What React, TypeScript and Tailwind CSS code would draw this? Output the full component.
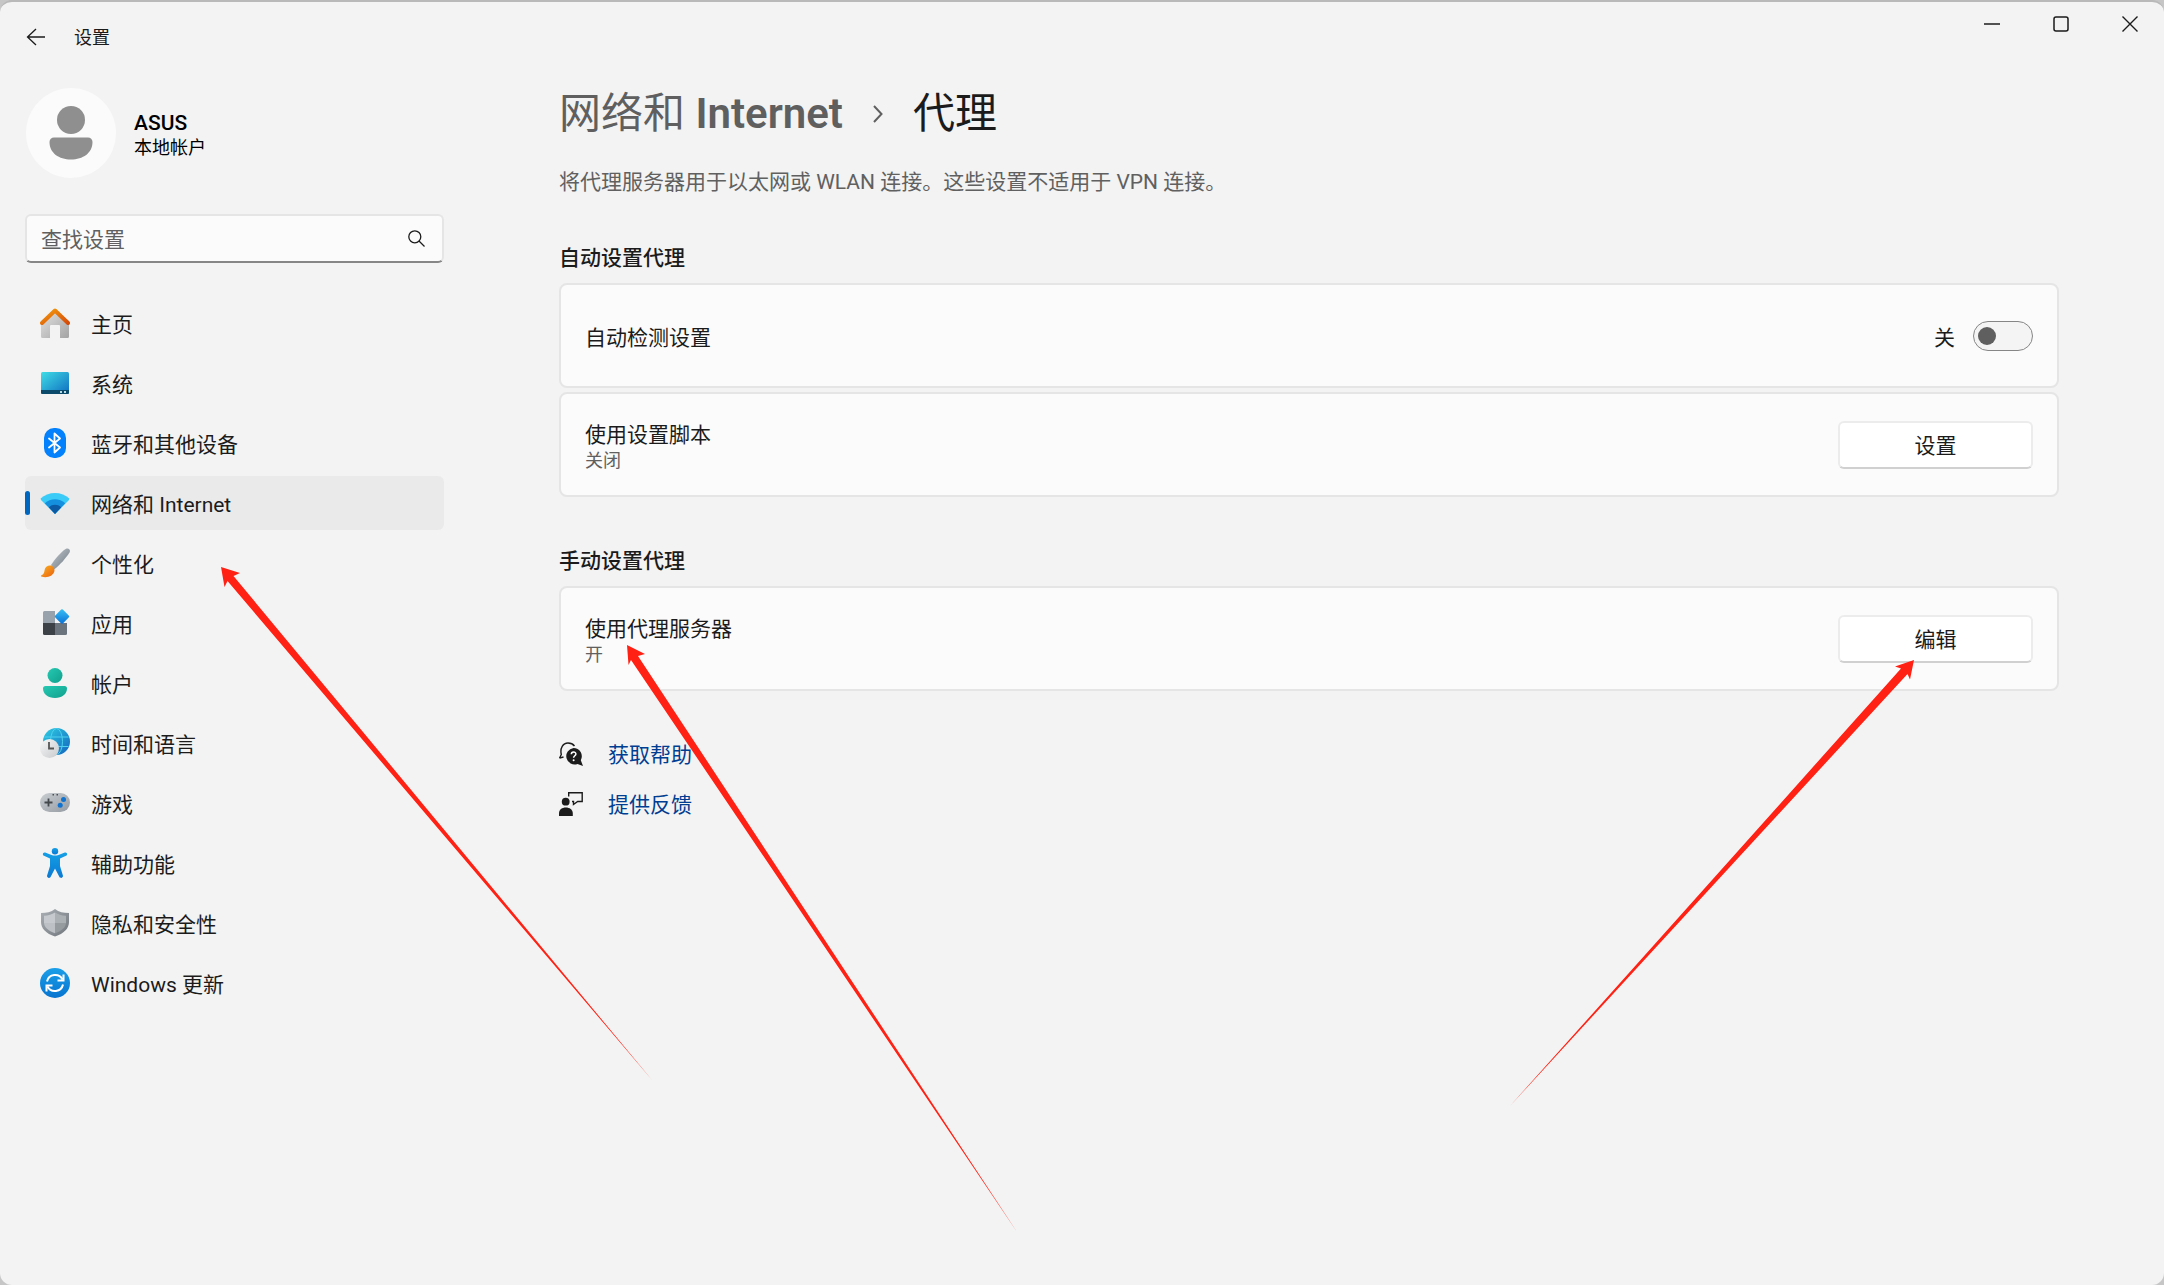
import { useState } from 'react';
import type { ReactNode } from 'react';

type NavItem = {
  label: string;
  icon: ReactNode;
};

const HomeIcon = () => (
  <svg viewBox="0 0 30 30" className="size-[30px]">
    <defs>
      <linearGradient id="homeWall" x1="0" y1="0" x2="1" y2="1">
        <stop offset="0" stopColor="#e4e4e4" />
        <stop offset="1" stopColor="#a3a3a3" />
      </linearGradient>
      <linearGradient id="homeRoof" x1="0" y1="0" x2="1" y2="1">
        <stop offset="0" stopColor="#f59a0c" />
        <stop offset="1" stopColor="#d64b08" />
      </linearGradient>
    </defs>
    <path d="M1 13 15 2l14 11v15.5a1.5 1.5 0 0 1-1.5 1.5H20V18a1 1 0 0 0-1-1h-8a1 1 0 0 0-1 1v12H2.500A1.500 1.500 0 0 1 1 28.500Z" fill="url(#homeWall)" />
    <path d="M2 15 15 2.500 28 15" fill="none" stroke="url(#homeRoof)" strokeWidth="4" strokeLinecap="round" strokeLinejoin="round" />
  </svg>
);

const SystemIcon = () => (
  <svg viewBox="0 0 30 30" className="size-[30px]">
    <defs>
      <linearGradient id="screen" x1="0" y1="0" x2="1" y2="1">
        <stop offset="0" stopColor="#3fdde6" />
        <stop offset="1" stopColor="#0f6dc0" />
      </linearGradient>
    </defs>
    <rect x="1" y="4" width="28" height="22" rx="1.500" fill="url(#screen)" />
    <path d="M1 22h28v2.500a1.500 1.500 0 0 1-1.500 1.500h-25A1.500 1.500 0 0 1 1 24.500Z" fill="#0b4a6b" />
    <path d="M20 23h2v2h-2zM24 23h2v2h-2z" fill="#b9dbe6" />
  </svg>
);

const BluetoothIcon = () => (
  <svg viewBox="0 0 30 30" className="size-[30px]">
    <rect x="4" y="0" width="22" height="30" rx="10" fill="#0380fb" />
    <path d="m9 10.500 11 9-5.500 5V5.500l5.500 5-11 9" fill="none" stroke="#fff" strokeWidth="1.800" strokeLinejoin="round" strokeLinecap="round" />
  </svg>
);

const NetworkIcon = () => (
  <svg viewBox="0 0 30 30" className="size-[30px]">
    <path d="M1 12 .6 10.600C8 3 22 3 29.400 10.600L29 12 15 26Z" fill="#3accf7" />
    <path d="M4.800 15.200C10.500 9.800 19.500 9.800 25.200 15.200L15 26Z" fill="#1490df" />
    <path d="M8.800 19.300C12.300 16 17.700 16 21.200 19.300L15 26Z" fill="#0c59a4" />
  </svg>
);

const BrushIcon = () => (
  <svg viewBox="0 0 30 30" className="size-[30px]">
    <defs>
      <linearGradient id="handle" x1="0" y1="0" x2="1" y2="1">
        <stop offset="0" stopColor="#c3c9cf" />
        <stop offset="1" stopColor="#6c7680" />
      </linearGradient>
      <linearGradient id="bristle" x1="0" y1="0" x2="1" y2="1">
        <stop offset="0" stopColor="#fbb422" />
        <stop offset="1" stopColor="#e9600f" />
      </linearGradient>
    </defs>
    <path d="M11 17C15 11 21 4 26 .8 28.500-.6 31 2 29.500 4.500 26 10 20 17 14 21.500Z" fill="url(#handle)" />
    <path d="M4.500 22.500C5 18.500 8 17 11 17.500c2.500 1 4 3.500 3.300 6C13 28 7 30.500 1.200 28.500.7 28 .8 27.500 1.500 27.300 3.500 26.500 4.200 25 4.500 22.500Z" fill="url(#bristle)" />
  </svg>
);

const AppsIcon = () => (
  <svg viewBox="0 0 30 30" className="size-[30px]">
    <defs>
      <linearGradient id="tile" x1="0" y1="0" x2="1" y2="1">
        <stop offset="0" stopColor="#37c2f5" />
        <stop offset="1" stopColor="#0a6fd6" />
      </linearGradient>
    </defs>
    <path d="M4.500 3H15v12H3V4.500A1.500 1.500 0 0 1 4.500 3Z" fill="#98a2ac" />
    <path d="M3 15h12v12H4.500A1.500 1.500 0 0 1 3 25.500Z" fill="#3c4147" />
    <path d="M15 15h12v10.500a1.500 1.500 0 0 1-1.500 1.500H15Z" fill="#6b747d" />
    <rect x="16.500" y="3" width="11" height="11" rx="1.200" transform="rotate(45 22 8.500)" fill="url(#tile)" />
  </svg>
);

const AccountIcon = () => (
  <svg viewBox="0 0 30 30" className="size-[30px]">
    <defs>
      <linearGradient id="account" x1="0" y1="0" x2="1" y2="1">
        <stop offset="0" stopColor="#26c9b3" />
        <stop offset="1" stopColor="#10a08c" />
      </linearGradient>
    </defs>
    <circle cx="15" cy="7.500" r="7.500" fill="url(#account)" />
    <path d="M5.500 18h19a2.500 2.500 0 0 1 2.500 2.500C27 26 22 30 15 30S3 26 3 20.500A2.500 2.500 0 0 1 5.500 18Z" fill="url(#account)" />
  </svg>
);

const TimeIcon = () => (
  <svg viewBox="0 0 30 30" className="size-[30px]">
    <defs>
      <linearGradient id="globe" x1="0" y1="0" x2="1" y2="1">
        <stop offset="0" stopColor="#2fcfe4" />
        <stop offset="1" stopColor="#1263bd" />
      </linearGradient>
      <linearGradient id="clock" x1="0" y1="0" x2="1" y2="1">
        <stop offset="0" stopColor="#f7f7f7" />
        <stop offset="1" stopColor="#c8cacc" />
      </linearGradient>
    </defs>
    <circle cx="16.500" cy="13.500" r="13.500" fill="url(#globe)" />
    <g fill="none" stroke="#4fd0ee" strokeWidth="1">
      <ellipse cx="16.500" cy="13.500" rx="6" ry="13" />
      <path d="M4.500 9h24M4.500 18.500h24" />
    </g>
    <circle cx="9.500" cy="20.500" r="9.500" fill="url(#clock)" />
    <path d="M9 14v6.500h5" fill="none" stroke="#555" strokeWidth="1.800" />
  </svg>
);

const GamingIcon = () => (
  <svg viewBox="0 0 30 30" className="size-[30px]">
    <defs>
      <linearGradient id="pad" x1="0" y1="0" x2="1" y2="1">
        <stop offset="0" stopColor="#c9ced2" />
        <stop offset="1" stopColor="#949ba2" />
      </linearGradient>
    </defs>
    <rect x="0" y="5" width="30" height="19" rx="9.500" fill="url(#pad)" />
    <path d="M12.500 6h1.500v1.500h-1.500zM16.500 6H18v1.500h-1.500z" fill="#4a4f54" />
    <path d="M8.500 10.500v8M4.500 14.500h8" stroke="#43484d" strokeWidth="1.800" />
    <circle cx="23.500" cy="11.500" r="2.500" fill="#0f73cf" />
    <circle cx="20.200" cy="17.300" r="2.500" fill="#0f73cf" />
  </svg>
);

const AccessibilityIcon = () => (
  <svg viewBox="0 0 30 30" className="size-[30px]">
    <defs>
      <linearGradient id="person" x1="0" y1="0" x2="0" y2="1">
        <stop offset="0" stopColor="#159fe6" />
        <stop offset="1" stopColor="#0a79d3" />
      </linearGradient>
    </defs>
    <circle cx="15" cy="3.200" r="3.200" fill="url(#person)" />
    <path d="M5.200 4.600 11.500 7c2.300.7 4.700.7 7 0l6.300-2.400c2.200-.7 3.300 2.300 1.200 3.200L20 10.600V18l2.900 9.500c.6 2.300-2.600 3.400-3.600 1.200L15 20.500l-4.300 8.200c-1 2.200-4.200 1.100-3.600-1.200L10 18v-7.400L4 7.800C1.900 6.900 3 3.900 5.200 4.600Z" fill="url(#person)" />
  </svg>
);

const ShieldIcon = () => (
  <svg viewBox="0 0 30 30" className="size-[30px]">
    <defs>
      <linearGradient id="shield" x1="0" y1="0" x2="1" y2="1">
        <stop offset="0" stopColor="#a9afb5" />
        <stop offset="1" stopColor="#70767c" />
      </linearGradient>
    </defs>
    <path d="M15 1c4 3 8.500 4 14 4v9c0 6.500-5 11.500-14 14.500C6 25.500 1 20.500 1 14V5c5.500 0 10-1 14-4Z" fill="url(#shield)" />
    <path d="M15 4.500V15H4V7.800c4.500-.3 7.800-1.300 11-3.300Z" fill="#c6cace" />
    <path d="M15 4.500c3.200 2 6.500 3 11 3.300V15H15Z" fill="#abb0b5" />
    <path d="M4 15h11v10.300C8 22.800 4.300 19.300 4 15Z" fill="#bdc1c5" />
    <path d="M26 15H15v10.300C22 22.800 25.700 19.300 26 15Z" fill="#969ba0" />
  </svg>
);

const UpdateIcon = () => (
  <svg viewBox="0 0 30 30" className="size-[30px]">
    <defs>
      <linearGradient id="update" x1="0" y1="0" x2="0" y2="1">
        <stop offset="0" stopColor="#1a9fe8" />
        <stop offset="1" stopColor="#0774d0" />
      </linearGradient>
    </defs>
    <circle cx="15" cy="15" r="15" fill="url(#update)" />
    <g fill="none" stroke="#fff" strokeWidth="2">
      <path d="M7 13.500A8.300 8.300 0 0 1 22.500 11.500" />
      <path d="M23.500 6.500v6h-6" />
      <path d="M23 16.500A8.300 8.300 0 0 1 7.500 18.500" />
      <path d="M6.500 23.500v-6h6" />
    </g>
  </svg>
);

const HelpIcon = () => (
  <svg viewBox="0 0 24 24" className="size-6 shrink-0">
    <path d="M.6 16 2.300 12.500C.8 6 4 1 9 1c3 0 5 1 6.500 3" fill="none" stroke="#1b1b1b" strokeWidth="1.400" />
    <path d="M.5 16 4.500 15" stroke="#1b1b1b" strokeWidth="1.400" />
    <path d="M14.500 6a8.300 8.300 0 0 1 7.300 12.300L24 24l-5.500-2A8.300 8.300 0 1 1 14.500 6Z" fill="#1b1b1b" />
    <path d="M12.300 12.300c0-3 4.600-3 4.600-.3 0 1.800-2.300 1.800-2.300 3.800" fill="none" stroke="#fff" strokeWidth="1.500" />
    <circle cx="14.600" cy="18.200" r="1" fill="#fff" />
  </svg>
);

const FeedbackIcon = () => (
  <svg viewBox="0 0 24 24" className="size-6 shrink-0">
    <circle cx="6.700" cy="9.700" r="3.900" fill="#1b1b1b" />
    <path d="M0 24v-2.500C0 17.500 3 15.500 6.800 15.500s7 2 7 6V24Z" fill="#1b1b1b" />
    <path d="M9.700 4.500V.8h13.500v8.700h-4.500L14.500 12.500v-3h-1.500" fill="none" stroke="#1b1b1b" strokeWidth="1.400" />
  </svg>
);

const NAV_ITEMS: NavItem[] = [
  { label: '主页', icon: <HomeIcon /> },
  { label: '系统', icon: <SystemIcon /> },
  { label: '蓝牙和其他设备', icon: <BluetoothIcon /> },
  { label: '网络和 Internet', icon: <NetworkIcon /> },
  { label: '个性化', icon: <BrushIcon /> },
  { label: '应用', icon: <AppsIcon /> },
  { label: '帐户', icon: <AccountIcon /> },
  { label: '时间和语言', icon: <TimeIcon /> },
  { label: '游戏', icon: <GamingIcon /> },
  { label: '辅助功能', icon: <AccessibilityIcon /> },
  { label: '隐私和安全性', icon: <ShieldIcon /> },
  { label: 'Windows 更新', icon: <UpdateIcon /> },
];

function TitleBar() {
  return (
    <header className="flex items-start justify-between">
      <div className="flex h-[70px] items-center gap-[18px] pl-4">
        <button aria-label="返回" className="flex h-10 w-10 items-center justify-center rounded">
          <svg viewBox="0 0 20 18" className="h-[18px] w-5" fill="none" stroke="#1b1b1b" strokeWidth="1.300">
            <path d="M19 9H1.500M10 1 1.500 9l8.500 8" />
          </svg>
        </button>
        <span className="pt-0.5 text-[18px] leading-6">设置</span>
      </div>
      <div className="flex">
        <button aria-label="最小化" className="flex h-11 w-[69px] items-center justify-center">
          <svg viewBox="0 0 16 16" className="size-4" stroke="#1b1b1b" strokeWidth="1.500">
            <path d="M0 8h16" />
          </svg>
        </button>
        <button aria-label="最大化" className="flex h-11 w-[69px] items-center justify-center">
          <svg viewBox="0 0 16 16" className="size-4" fill="none" stroke="#1b1b1b" strokeWidth="1.500">
            <rect x="1" y="1" width="14" height="14" rx="2" />
          </svg>
        </button>
        <button aria-label="关闭" className="flex h-11 w-[69px] items-center justify-center">
          <svg viewBox="0 0 16 16" className="size-4" stroke="#1b1b1b" strokeWidth="1.400">
            <path d="m.5.500 15 15m0-15-15 15" />
          </svg>
        </button>
      </div>
    </header>
  );
}

function Sidebar() {
  const [active, setActive] = useState('网络和 Internet');

  return (
    <aside className="w-[419px] shrink-0">
      <div className="flex items-center gap-[18px] pt-4 pl-px">
        <div className="flex size-[90px] items-center justify-center rounded-full bg-[#fbfbfb]">
          <svg viewBox="0 0 44 54" className="h-[54px] w-11" fill="#8f8f8f">
            <circle cx="22" cy="14" r="14" />
            <path d="M5 31.500h34a4.500 4.500 0 0 1 4.500 4.500C43.500 47 34 53.500 22 53.500S.5 47 .5 36A4.500 4.500 0 0 1 5 31.500Z" />
          </svg>
        </div>
        <div className="pt-1 text-black">
          <div className="text-[21px] leading-[26px] font-medium">ASUS</div>
          <div className="text-[18px] leading-6">本地帐户</div>
        </div>
      </div>

      <div className="mt-9 flex h-[49px] items-center rounded-md border-2 border-[#e5e5e5] border-b-[#868686] bg-[#fbfbfb] pr-[17px] pl-[14px]">
        <input
          type="text"
          aria-label="查找设置"
          placeholder="查找设置"
          className="min-w-0 flex-1 bg-transparent pt-0.5 text-[21px] leading-7 outline-none placeholder:text-[#606060]"
        />
        <svg viewBox="0 0 17 17" className="size-[17px]" fill="none" stroke="#1b1b1b" strokeWidth="1.300">
          <circle cx="6.800" cy="6.800" r="6" />
          <path d="m11 11 5.500 5.500" />
        </svg>
      </div>

      <nav className="mt-[33px] flex flex-col gap-1.5">
        {NAV_ITEMS.map((item) => (
          <button
            key={item.label}
            onClick={() => setActive(item.label)}
            className={`flex h-[54px] items-center rounded-md text-left text-[21px] leading-7 ${
              active === item.label ? 'bg-[#eaeaea]' : ''
            }`}
          >
            <span className={`h-6 w-[5px] rounded-full ${active === item.label ? 'bg-[#0067c0]' : ''}`} />
            <span className="mr-[21px] ml-[10px]">{item.icon}</span>
            <span className="pt-1">{item.label}</span>
          </button>
        ))}
      </nav>
    </aside>
  );
}

type SettingCardProps = {
  title: string;
  status?: string;
  children: ReactNode;
};

function SettingCard({ title, status, children }: SettingCardProps) {
  return (
    <div className="flex min-h-[105px] items-center justify-between rounded-lg border-2 border-[#e5e5e5] bg-[#fbfbfb] px-6">
      <div className="pt-1">
        <div className="text-[21px] leading-7">{title}</div>
        {status && <div className="text-[18px] leading-6 text-[#606060]">{status}</div>}
      </div>
      {children}
    </div>
  );
}

function ActionButton({ children }: { children: ReactNode }) {
  return (
    <button className="h-12 w-[195px] rounded-md border-2 border-[#ececec] border-b-[#d0d0d0] bg-white pt-0.5 text-[21px] leading-7">
      {children}
    </button>
  );
}

// Red pointers drawn over the window
function Arrows() {
  return (
    <svg className="pointer-events-none absolute top-0 left-0 h-[1285px] w-[2164px]" viewBox="0 0 2164 1285" fill="#ff2113">
      <path d="M221 567 240 573 233.500 576 652 1080 227.500 581 224.500 587Z" />
      <path d="M627 645 645 654 638 656 1017 1232 631 660 628.500 665Z" />
      <path d="M1914 660 1895 666.500 1901 668.500 1510 1106 1907.500 674 1910 679.500Z" />
    </svg>
  );
}

export default function App() {
  const [autoDetect, setAutoDetect] = useState(false);

  return (
    <div className="relative min-h-screen bg-[#c6c6c6] font-['Roboto','Noto_Sans_CJK_SC',sans-serif] text-[#1b1b1b]">
      <div className="min-h-screen rounded-xl border-t-2 border-[#b9b9b9] bg-[#f3f3f3]">
        <TitleBar />
        <div className="flex pr-[105px] pl-[25px]">
          <Sidebar />
          <main className="min-w-0 flex-1 pt-3 pb-16 pl-[115px]">
            <h1 className="flex items-center text-[42px] leading-[60px]">
              <a href="#network" className="text-[#5f5f5f]">
                网络和 <span className="font-semibold">Internet</span>
              </a>
              <svg viewBox="0 0 10 18" className="mx-[30px] h-[18px] w-2.5" fill="none" stroke="#5f5f5f" strokeWidth="2">
                <path d="m1 1 7.500 8L1 17" />
              </svg>
              <span>代理</span>
            </h1>
            <p className="mt-6 text-[21px] leading-7 text-[#606060]">
              将代理服务器用于以太网或 WLAN 连接。这些设置不适用于 VPN 连接。
            </p>

            <h2 className="mt-12 mb-[11px] text-[21px] leading-7 font-medium">自动设置代理</h2>
            <div className="flex flex-col gap-1">
              <SettingCard title="自动检测设置">
                <label className="flex items-center gap-[18px] text-[21px] leading-7">
                  <span className="pt-1">{autoDetect ? '开' : '关'}</span>
                  <input
                    type="checkbox"
                    role="switch"
                    aria-label="自动检测设置"
                    checked={autoDetect}
                    onChange={(e) => setAutoDetect(e.target.checked)}
                    className="flex h-[30px] w-[60px] appearance-none items-center rounded-full border border-[#868686] bg-[#f4f4f4] px-1 before:size-[18px] before:rounded-full before:bg-[#5f5f5f] checked:justify-end checked:bg-[#0067c0] checked:before:bg-white"
                  />
                </label>
              </SettingCard>
              <SettingCard title="使用设置脚本" status="关闭">
                <ActionButton>设置</ActionButton>
              </SettingCard>
            </div>

            <h2 className="mt-[50px] mb-[11px] text-[21px] leading-7 font-medium">手动设置代理</h2>
            <SettingCard title="使用代理服务器" status="开">
              <ActionButton>编辑</ActionButton>
            </SettingCard>

            <div className="mt-12 flex flex-col gap-5 text-[21px] leading-7 text-[#003e92]">
              <a href="#help" className="flex items-center gap-[25px] self-start">
                <HelpIcon />
                <span className="pt-0.5">获取帮助</span>
              </a>
              <a href="#feedback" className="flex items-center gap-[25px] self-start">
                <FeedbackIcon />
                <span className="pt-0.5">提供反馈</span>
              </a>
            </div>
          </main>
        </div>
      </div>
      <Arrows />
    </div>
  );
}
